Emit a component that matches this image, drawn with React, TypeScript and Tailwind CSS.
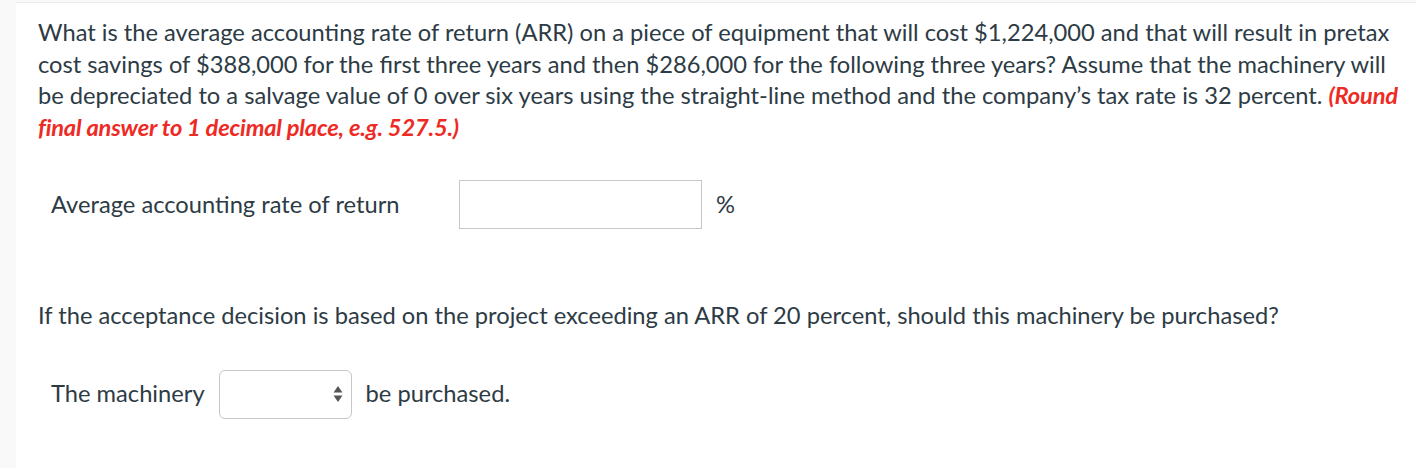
import React from 'react';

export default function App() {
  return (
    <div className="w-[1416px] h-[468px] bg-[#f9f9f9] pl-4 pt-[2px] font-['Lato','Liberation_Sans',sans-serif] text-[#2d3b45]">
      <div className="h-full bg-white border-t border-[#ececec] pl-[22px] pr-4">
        <p className="pt-[14px] text-[23.7px] leading-[31.5px]">
          What is the average accounting rate of return (ARR) on a piece of equipment that will cost $1,224,000 and that will result in pretax cost savings of $388,000 for the first three years and then $286,000 for the following three years? Assume that the machinery will be depreciated to a salvage value of 0 over six years using the straight-line method and the company’s tax rate is 32 percent.{' '}
          <span className="font-bold italic tracking-[-0.2px] text-[#ee2a24]">(Round final answer to 1 decimal place, e.g. 527.5.)</span>
        </p>

        <div className="mt-[37px] flex items-center pl-[13px] text-[23.7px]">
          <span className="w-[408px]">Average accounting rate of return</span>
          <input className="h-[49px] w-[243px] border border-[#c7c7c7] bg-white outline-none" />
          <span className="ml-[14px]">%</span>
        </div>

        <p className="mt-[71px] text-[23.7px] leading-[31.5px]">
          If the acceptance decision is based on the project exceeding an ARR of 20 percent, should this machinery be purchased?
        </p>

        <div className="mt-[38px] flex items-center pl-[13px] text-[23.7px]">
          <span>The machinery</span>
          <div className="ml-[14px] flex h-[49px] w-[133px] items-center justify-end rounded-[6px] border border-[#c7c7c7] pr-[8px]">
            <svg width="10" height="18" viewBox="0 0 10 18">
              <path d="M5 1 L9.5 7.5 L0.5 7.5 Z" fill="#555" />
              <path d="M5 17 L9.5 10.5 L0.5 10.5 Z" fill="#555" />
            </svg>
          </div>
          <span className="ml-[14px]">be purchased.</span>
        </div>
      </div>
    </div>
  );
}
